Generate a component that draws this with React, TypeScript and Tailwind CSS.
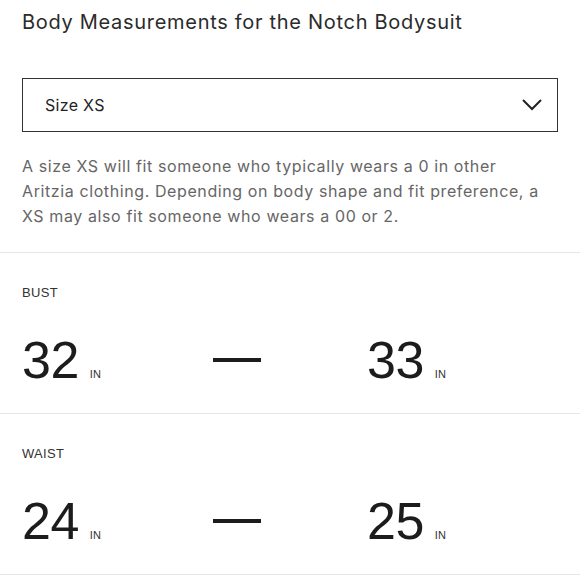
const rows = [
  { label: "BUST", min: 32, max: 33 },
  { label: "WAIST", min: 24, max: 25 },
];

const Value = ({ n }: { n: number }) => (
  <div className="flex items-baseline">
    <span className="text-[52px] leading-none text-[#1c1c1c] tracking-[-0.5px]">{n}</span>
    <span className="ml-[11px] text-[11px] text-[#333]">IN</span>
  </div>
);

export default function App() {
  return (
    <div className="w-[580px] h-[580px] overflow-hidden bg-white font-['Inter','Liberation_Sans',sans-serif]">
      <div className="px-[22px] pt-[8px]">
        <h1 className="text-[20px] leading-[28px] tracking-[0.7px] text-[#2b2b2b]">Body Measurements for the Notch Bodysuit</h1>
        <button className="mt-[42px] w-[536px] h-[54px] border border-[#333] flex items-center justify-between pl-[22px] pr-[14px]">
          <span className="text-[16px] tracking-[0.3px] text-[#222]">Size XS</span>
          <svg width="22" height="14" viewBox="0 0 22 14" fill="none" stroke="#222" strokeWidth="2">
            <path d="M2 2l9 9 9-9" />
          </svg>
        </button>
        <p className="mt-[22px] w-[556px] whitespace-nowrap text-[16px] leading-[25px] tracking-[0.6px] text-[#666]">
          A size XS will fit someone who typically wears a 0 in other
          <br />
          Aritzia clothing. Depending on body shape and fit preference, a
          <br />
          XS may also fit someone who wears a 00 or 2.
        </p>
      </div>
      <div className="mt-[23px] border-t border-[#e6e6e6]">
        {rows.map((r) => (
          <div key={r.label} className="border-b border-[#e6e6e6] h-[161px] px-[22px] pt-[30px]">
            <div className="text-[13px] text-[#333] tracking-[0.3px] font-['Liberation_Sans',sans-serif]">{r.label}</div>
            <div className="mt-[31px] flex items-center font-['Liberation_Sans',sans-serif]">
              <div className="w-[191px]"><Value n={r.min} /></div>
              <div className="w-[48px] h-[4px] bg-[#1c1c1c]" />
              <div className="ml-[106px]"><Value n={r.max} /></div>
            </div>
          </div>
        ))}
      </div>
    </div>
  );
}
